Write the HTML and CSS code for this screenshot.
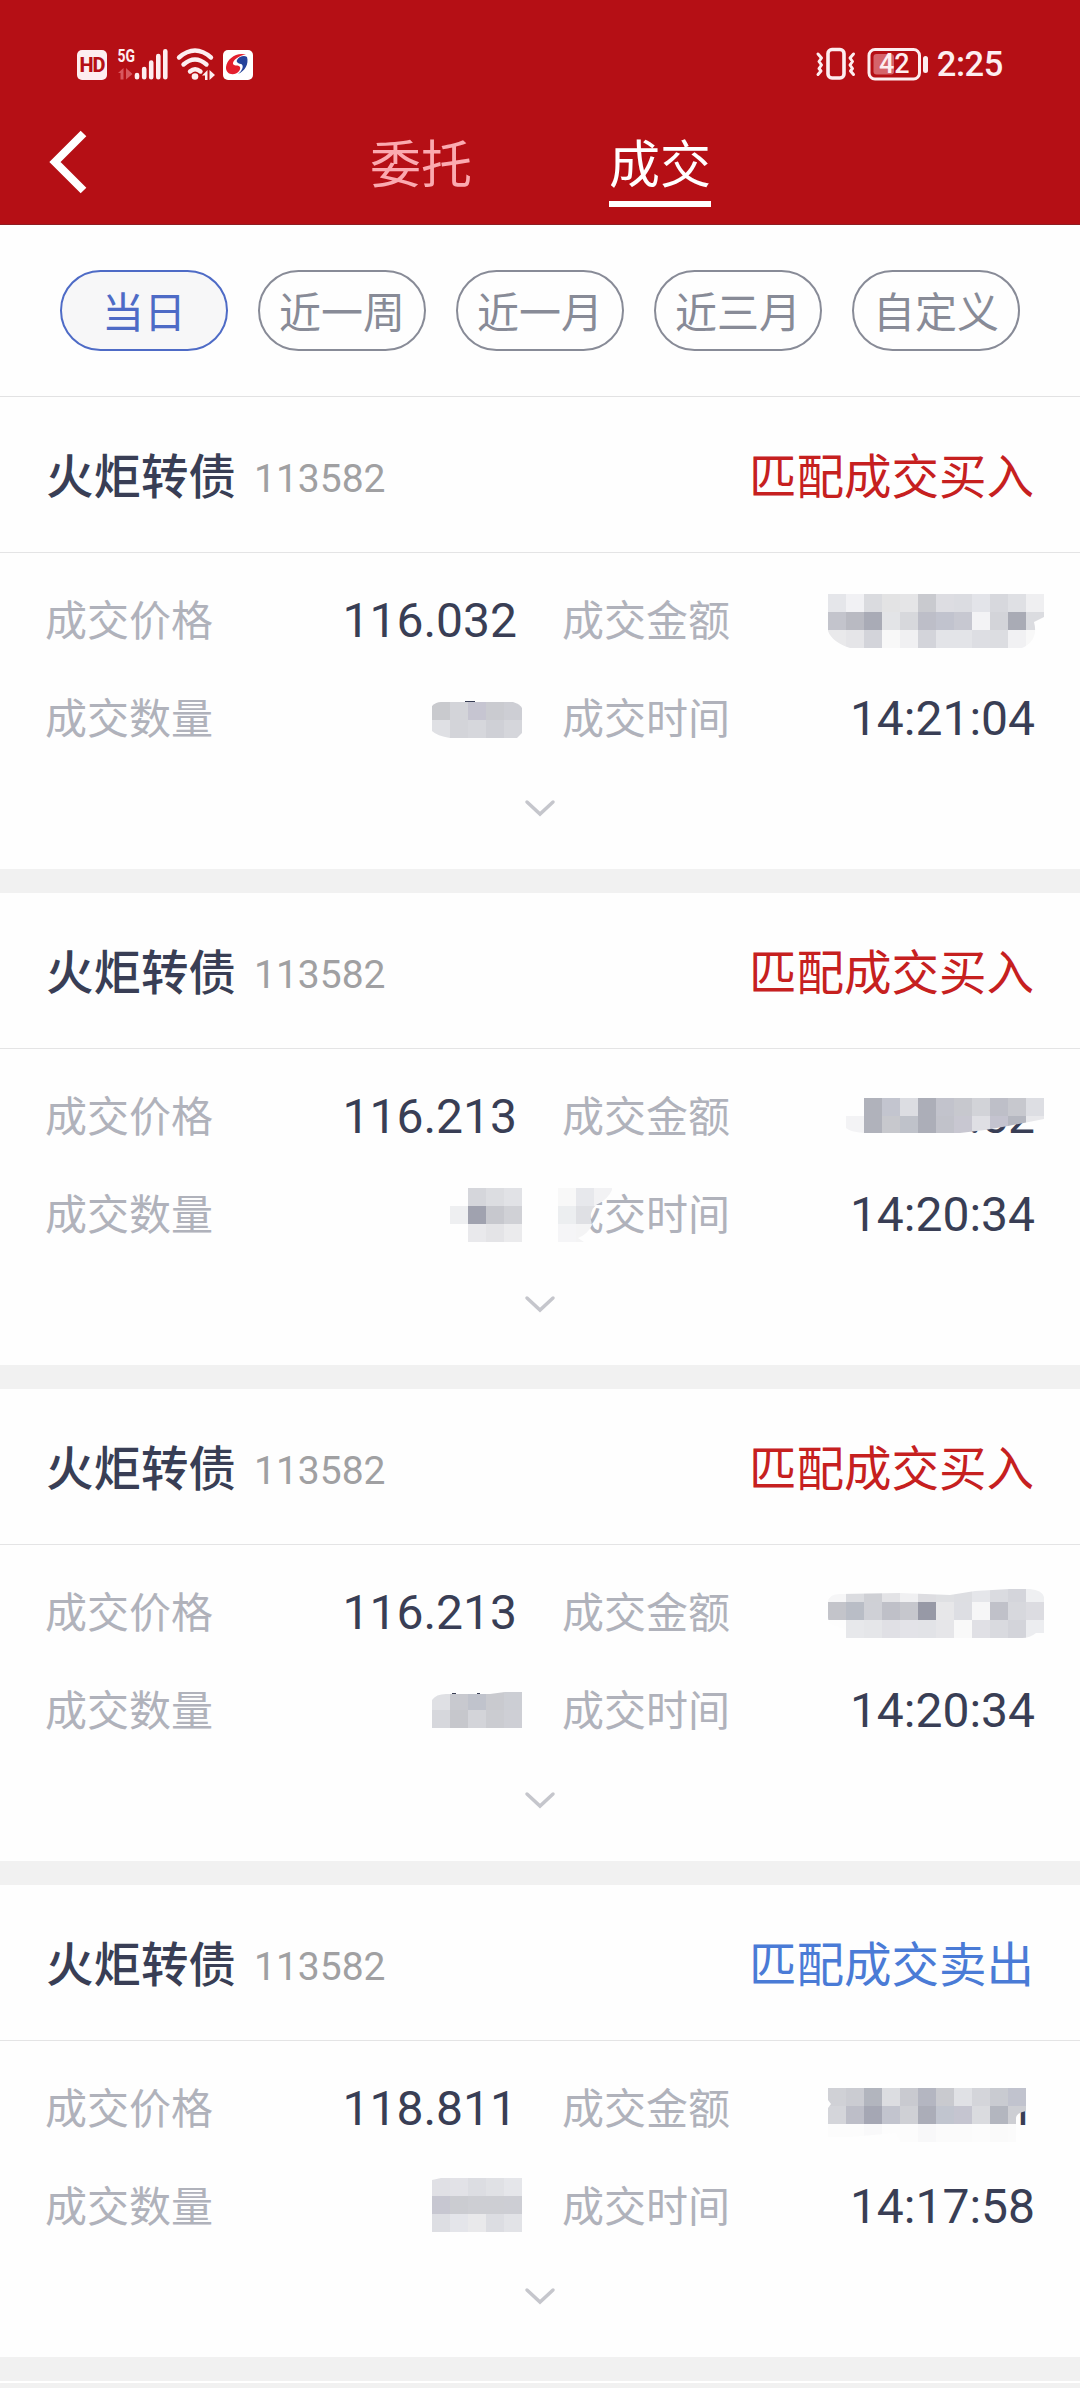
FILE: index.html
```html
<!DOCTYPE html>
<html lang="zh-CN">
<head>
<meta charset="utf-8">
<title>成交</title>
<link rel="stylesheet" href="styles.css">
</head>
<body>
<header class="header">
  <div class="status">
    <div class="status-left">
      <span class="hd">HD</span>
      <svg class="signal" width="51" height="34" viewBox="117 47 51 34">
        <text class="net" x="117.5" y="61.7" textLength="17.5" lengthAdjust="spacingAndGlyphs">5G</text>
        <g fill="#d8575e"><path d="M118 73l5.500-5v11.500h-3v-6.500zM126 68v11.500l6.500-5.500z"/></g>
        <g stroke="#fdeef0" stroke-width="4.600" stroke-linecap="round"><path d="M137 75v2.200M144.200 69v8.200M151.200 62.500v14.700M158.300 56v21.200M165.300 51.200v26"/></g>
      </svg>
      <svg class="wifi" width="40" height="34" viewBox="176 47 40 34">
        <g fill="none" stroke="#fdeef0" stroke-width="4.400" stroke-linecap="round"><path d="M179 57.500Q195 43.500 211 57.500M183.500 64.500Q195 54.500 206.500 64.500M190 71.500Q195 67 200.500 71.500"/></g>
        <circle cx="195" cy="76.500" r="3.300" fill="#fdeef0"/>
        <path fill="#fdeef0" d="M202 75.500l5.500-5.500v10h-2.500v-4.500zM209.500 70v10l5.500-5z"/>
      </svg>
      <svg class="broker" width="30" height="30" viewBox="0 0 30 30">
        <rect width="30" height="30" rx="5" fill="#fff"/>
        <path fill="#e31f2e" d="M23 4.500C13 2 4 9 3 17c-.5 6 5 8.500 10 6.500 4-2 5.500-6 3-7.500-2-1-5 0-6-2-.500-4 6-8.500 13-9.500z"/>
        <path fill="#25439b" d="M24 7c2 7-2 14-9 17 5-4 6-9 3-10-3-.5-5-2-4-4 2-3.500 7-5 10-3z"/>
      </svg>
    </div>
    <div class="status-right">
      <svg width="40" height="34" viewBox="816 47 40 34" fill="none" stroke="#fdeef0" stroke-linecap="round" stroke-linejoin="round">
        <rect x="828" y="49.500" width="16" height="28.500" rx="4" stroke-width="3.600"/>
        <path stroke-width="3" d="M818 54l3.500 4-2.500 3.500 2.500 3.500-2.500 3.500 2 2.500-3 3.500M853.500 54l-3.500 4 2.500 3.500-2.500 3.500 2.500 3.500-2 2.500 3 3.500"/>
      </svg>
      <svg width="62" height="34" viewBox="867 47 62 34">
        <rect x="869" y="49.500" width="50.500" height="29.500" rx="6" fill="none" stroke="#fdeef0" stroke-width="3"/>
        <rect x="873.500" y="54" width="20.500" height="20.500" rx="3" fill="#d5646b"/>
        <rect x="923" y="56" width="5" height="17" rx="2.500" fill="#fdeef0"/>
        <text class="level" x="879" y="73">42</text>
      </svg>
      <span class="clock">2:25</span>
    </div>
  </div>
  <nav class="nav">
    <svg class="back" width="38" height="64" viewBox="0 0 38 64" fill="none" stroke="#fff" stroke-width="8"><path d="M34.500 3.500L6 32l28.500 28.500"/></svg>
    <div class="tabs"><span class="tab">委托</span><span class="tab tab-on">成交</span></div>
  </nav>
</header>
<div class="filters">
  <span class="chip chip-on">当日</span><span class="chip">近一周</span><span class="chip">近一月</span><span class="chip">近三月</span><span class="chip">自定义</span>
</div>
<main class="list">
  <section class="card">
    <div class="head"><span class="name">火炬转债</span><span class="code">113582</span><span class="side buy">匹配成交买入</span></div>
    <div class="grid">
      <span class="label">成交价格</span><span class="value">116.032</span><span class="label second">成交金额</span><span class="value"></span>
      <span class="label">成交数量</span><span class="value"></span><span class="label second">成交时间</span><span class="value">14:21:04</span>
    </div>
    <svg class="arrow" viewBox="0 0 30 16"><path d="M2 2l13 12L28 2"/></svg>
    <svg class="mask" viewBox="0 397 1080 472"></svg>
  </section>
  <section class="card">
    <div class="head"><span class="name">火炬转债</span><span class="code">113582</span><span class="side buy">匹配成交买入</span></div>
    <div class="grid">
      <span class="label">成交价格</span><span class="value">116.213</span><span class="label second">成交金额</span><span class="value">.52</span>
      <span class="label">成交数量</span><span class="value"></span><span class="label second">成交时间</span><span class="value">14:20:34</span>
    </div>
    <svg class="arrow" viewBox="0 0 30 16"><path d="M2 2l13 12L28 2"/></svg>
    <svg class="mask" viewBox="0 893 1080 472"></svg>
  </section>
  <section class="card">
    <div class="head"><span class="name">火炬转债</span><span class="code">113582</span><span class="side buy">匹配成交买入</span></div>
    <div class="grid">
      <span class="label">成交价格</span><span class="value">116.213</span><span class="label second">成交金额</span><span class="value"></span>
      <span class="label">成交数量</span><span class="value"></span><span class="label second">成交时间</span><span class="value">14:20:34</span>
    </div>
    <svg class="arrow" viewBox="0 0 30 16"><path d="M2 2l13 12L28 2"/></svg>
    <svg class="mask" viewBox="0 1389 1080 472"></svg>
  </section>
  <section class="card">
    <div class="head"><span class="name">火炬转债</span><span class="code">113582</span><span class="side sell">匹配成交卖出</span></div>
    <div class="grid">
      <span class="label">成交价格</span><span class="value">118.811</span><span class="label second">成交金额</span><span class="value">1</span>
      <span class="label">成交数量</span><span class="value"></span><span class="label second">成交时间</span><span class="value">14:17:58</span>
    </div>
    <svg class="arrow" viewBox="0 0 30 16"><path d="M2 2l13 12L28 2"/></svg>
    <svg class="mask" viewBox="0 1885 1080 472"></svg>
  </section>
  <div class="more"></div>
</main>
<script src="mask.js"></script>
</body>
</html>
```
FILE: styles.css
```css
* { box-sizing: border-box; }
body {
  margin: 0;
  width: 1080px;
  height: 2388px;
  overflow: hidden;
  background: #f1f1f1;
  color: #393e55;
  font-family: Roboto, "Noto Sans CJK SC", sans-serif;
}
svg { display: block; flex: none; overflow: visible; }

.header { height: 225px; background: #b50f15; border-bottom: 1px solid #8f1d22; }
.status { height: 81px; padding: 47px 77px 0; display: flex; justify-content: space-between; }
.status-left, .status-right { display: flex; align-items: flex-start; }
.hd {
  width: 30px; height: 30px; margin-top: 3px; border-radius: 5px;
  background: #fdeef0; color: #b50f15;
  font-size: 20px; font-weight: 800; line-height: 30px; text-align: center; letter-spacing: -1px;
}
.signal { margin-left: 10px; }
.net { font-size: 19px; font-weight: 700; fill: #fdeef0; }
.wifi { margin-left: 8px; }
.broker { margin: 3px 0 0 7px; }
.status-right { gap: 11px; }
.level { font-size: 27px; font-weight: 500; fill: #fdeef0; }
.clock { margin-left: -3px; color: #fdeef0; font-size: 34.5px; font-weight: 500; line-height: 35px; letter-spacing: -0.4px; }

.nav { height: 143px; padding-left: 49px; display: flex; align-items: flex-start; }
.back { margin-top: 49px; }
.tabs { margin-left: 283px; display: flex; gap: 137px; }
.tab { height: 126px; padding-top: 49px; color: #fbaab0; font-size: 51px; line-height: 72px; width: 102px; white-space: nowrap; }
.tab-on { color: #fff; border-bottom: 6px solid #fff; }

.filters {
  height: 172px; padding: 45px 60px 0; display: flex; gap: 30px;
  background: #fefefe; border-bottom: 1px solid #e2e2e3;
}
.chip {
  width: 168px; height: 81px; border: 2px solid #888b97; border-radius: 41px;
  color: #888b97; font-size: 42px; line-height: 83px; text-align: center;
}
.chip-on { color: #4e6bc6; border-color: #4e6bc6; background: #f7f7f8; }

.list { display: flex; flex-direction: column; gap: 24px; }
.card { position: relative; height: 472px; background: #fefefe; }
.head { height: 156px; padding: 0 46px 2px 46px; display: flex; align-items: center; border-bottom: 1px solid #e4e4e5; }
.name { font-size: 47.5px; font-weight: 500; }
.code { margin-left: 18px; padding-top: 10px; font-size: 39px; color: #a0a0a2; }
.side { margin-left: auto; font-size: 47.5px; }
.buy { color: #c6201f; }
.sell { color: #4a7bd6; }
.grid {
  padding: 18px 45px 0; display: grid;
  grid-template-columns: 200px 272px 245px 273px; grid-auto-rows: 98px; align-items: center;
}
.label { padding-bottom: 5px; font-size: 42px; color: #b0b2bb; }
.second { padding-left: 45px; }
.value { font-size: 48px; text-align: right; }
.arrow {
  width: 30px; height: 16px; margin: 33px auto 0;
  fill: none; stroke: #c5c6cc; stroke-width: 3.5; stroke-linecap: round;
}
.mask { position: absolute; left: 0; top: 0; width: 1080px; height: 472px; }
.more { height: 5px; border-top: 2px solid #fff; }
```
FILE: mask.js
```js
// Pixelated covers for private amounts: 18px blocks, cut to a brush outline.
var SIZE = 18;
var masks = [
  { card: 0, x: 828, y: 594,
    clip: 'M828 594H1044V617L1034 622Q1039 640 1022 648H850Q832 642 828 631Z',
    rows: ['e5e6ea f1f1f4 dadbdf e3e3e4 e5e5e7 c9cacf dddde2 dbdce1 e3e4e9 d7d8dd dfe0e4 efeff1',
           'c3c4cc b9bac2 a9abb6 e3e4e7 d7d8dc bdbec8 c1c3ce c7c8d1 f3f3f5 d3d4d9 a9abb5 dbdce0',
           'e9e9eb e5e5e8 d3d4da f8f8f8 f0f0f2 d3d4da e3e4e8 e3e4e8 dddee3 dcdde1 f1f1f3 f8f8f8'] },
  { card: 0, x: 432, y: 702,
    clip: 'M432 706Q436 702 441 702H513Q520 704 522 708V733L517 738H450Q437 736 432 731Z',
    rows: ['c9cace d3d4d9 c6c5d1 cacbd0 cdced4', 'dfe0e4 d3d4d9 d6d7dc cfd0d6 d5d6db'],
    marks: 'M465 701h10v1h-10z' },
  { card: 1, x: 846, y: 1098,
    clip: 'M846 1098H1044V1119L1008 1126L985 1130L960 1133H864Q850 1132 846 1128Z',
    rows: ['fefefe b0b2bb c3c5cf dcdde2 acaeb8 c2c3cc c7c8ce d2d3d8 bebfc8 c7c8ce dddee3',
           'f3f3f5 b0b2bb c7c8cd bfc2ca acaeb8 c1c2ca c8c7d1 dfdfe4 c4c3cf b5b7c0 e8e8eb'] },
  { card: 1, x: 450, y: 1188, clip: 'M450 1188H522V1242H450Z',
    rows: ['fefefe d5d6db dcdde1 e1e2e6', 'eeeff1 a0a2af c7c8ce d0d1d6', 'fefefe e9e9ec e4e4e7 ebebed'] },
  { card: 1, x: 558, y: 1188,
    clip: 'M558 1188H613Q608 1200 596 1205Q588 1212 592 1225Q588 1234 578 1238L584 1242H558Z',
    rows: ['f8f8f8 e7e8ec f2f2f4', 'eceef0 dfe0e4 dfe0e4', 'f5f5f7 f4f4f5 f4f4f5'] },
  { card: 2, x: 828, y: 1584,
    clip: 'M828 1602Q829 1594 840 1594L900 1593L950 1595L975 1591L1010 1589H1030Q1042 1590 1044 1597V1633H1036Q1030 1638 1022 1638H846V1630L836 1626Q828 1624 828 1618Z',
    rows: ['f6f6f7 dbdce0 cfd0d5 e3e3e6 f0f0f2 dddde1 dfe0e3 dddee2 e5e6ea dadbe0 d4d5db eff0f2',
           'c3c4ca b9bdc6 cfd0d6 bfc0c8 c6c7cd 9799a6 e7e7e9 dddee3 f6f6f7 c0c1c9 d7d8dd dcdce1',
           'fdfdfd e7e8eb e5e6e9 e0e0e5 e3e3e8 e2e3e7 e6e6e9 f9f9f9 e0e0e5 d9dadf d3d4da ecedf0'] },
  { card: 2, x: 432, y: 1692,
    clip: 'M432 1700Q436 1694 446 1694H490L505 1692H522V1728H432Z',
    rows: ['dfe0e4 c8c9cf c0c3cc c9cacf ccced4', 'd6d7dc c6c7cc d3d4d9 cbccd1 cecfd5'],
    marks: 'M452 1693h4v1h-4zM477 1693h3v1h-3z' },
  { card: 3, x: 828, y: 2088,
    clip: 'M828 2088H1026V2111Q1016 2113 1016 2118V2142H900L896 2133L850 2137H828V2108L831 2104L828 2100Z',
    rows: ['d0d1d6 cbccd2 b2b5be dcdde1 c9cad0 b4b6c1 c9cacf e0e1e5 d4d5da c9cbd1 c1c3ce',
           'd4d5da bdbec8 a5a7b4 c2c4ce cfd0d5 abadb8 c1c5cf c5c5d0 dadbdf b3b6bf cdced3',
           'fcfcfc fcfcfc f9f9fa fdfdfd fcfcfc f8f8f9 fbfbfb fbfbfb fcfcfc fafafa fbfbfb'] },
  { card: 3, x: 432, y: 2178, clip: 'M432 2180L441 2178H522V2232H432Z',
    rows: ['e0e0e5 e2e2e7 dcdde2 e0e1e5 e5e6ea', 'c7c7d1 cbccd1 cdced3 cdced3 cdced4', 'dddee3 e4e5ea e9e9eb dcdde2 e2e3e7'] }
];
var layers = document.querySelectorAll('.mask');
masks.forEach(function (m, n) {
  var out = '<clipPath id="brush' + n + '"><path d="' + m.clip + '"/></clipPath>' +
    '<g clip-path="url(#brush' + n + ')" shape-rendering="crispEdges">';
  m.rows.forEach(function (row, r) {
    row.split(' ').forEach(function (c, i) {
      out += '<rect x="' + (m.x + i * SIZE) + '" y="' + (m.y + r * SIZE) +
        '" width="18" height="18" fill="#' + c + '"/>';
    });
  });
  out += '</g>';
  if (m.marks) out += '<path fill="#393e55" d="' + m.marks + '"/>';
  layers[m.card].insertAdjacentHTML('beforeend', out);
});
```
